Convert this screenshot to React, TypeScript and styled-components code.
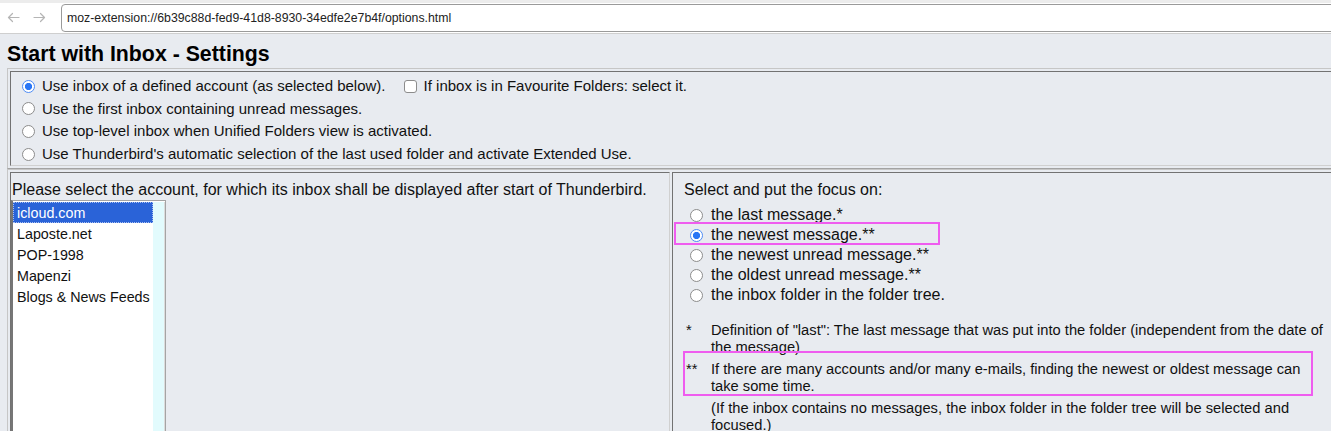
import React from "react";
import styled, { createGlobalStyle } from "styled-components";

const GlobalStyle = createGlobalStyle`
  html, body { margin: 0; padding: 0; background: #e8ebf0; overflow: hidden; }
  body { font-family: "Liberation Sans", Arial, Helvetica, sans-serif; color: #111; }
  * { box-sizing: border-box; }
`;

const Toolbar = styled.div`
  display: flex;
  align-items: center;
  height: 34px;
  background: #fff;
  border-top: 3px solid #ececec;
  border-bottom: 1px solid #cfcfcf;
  padding-bottom: 2px;
`;

const NavButton = styled.span`
  display: flex;
  align-items: center;
  justify-content: center;
  width: 26px;
  height: 26px;
`;

const NavGroup = styled.div`
  display: flex;
  align-items: center;
  width: 61px;
`;

const UrlField = styled.div`
  flex: 1;
  height: 28px;
  margin-top: 1px;
  margin-right: -8px;
  border: 1px solid #9a9a9a;
  border-radius: 4px;
  display: flex;
  align-items: center;
  padding-left: 5px;
  font-size: 12.3px;
  color: #222;
`;

const Page = styled.div`
  padding: 9px 0 0 7px;
`;

const Title = styled.h1`
  margin: 0 0 2px 0;
  font-size: 21.3px;
  line-height: 23px;
  font-weight: bold;
  color: #000;
`;

const TableBox = styled.div`
  width: 1336px;
  padding: 2px;
  border: 1px solid;
  border-color: #c6c6c6 #a2a2a2 #a2a2a2 #c6c6c6;
`;

const SplitTable = styled(TableBox)`
  display: grid;
  grid-template-columns: 660px 1fr;
  column-gap: 2px;
  align-items: stretch;
`;

const Cell = styled.div<{ $size?: number }>`
  border: 1px solid;
  border-color: #727272 #d0d0d0 #d0d0d0 #727272;
  font-size: ${(p) => p.$size ?? 16}px;
  line-height: 18px;
`;

const OptionsCell = styled(Cell)`
  padding: 3px 0 0 11px;
`;

const OptionRow = styled.label`
  display: flex;
  align-items: center;
  height: 22.6px;
  gap: 7px;
`;

const Radio = styled.span<{ $checked?: boolean }>`
  flex: none;
  width: 13px;
  height: 13px;
  border-radius: 50%;
  border: 1px solid ${(p) => (p.$checked ? "#4d8cf5" : "#8c8c8c")};
  background: ${(p) =>
    p.$checked
      ? "radial-gradient(circle, #2a76f5 0 3.3px, #ffffff 3.9px)"
      : "#fff"};
`;

const Checkbox = styled.span`
  flex: none;
  width: 13px;
  height: 13px;
  border-radius: 3px;
  border: 1px solid #8c8c8c;
  background: #fff;
  margin-left: 11px;
`;

const AccountCell = styled(Cell)`
  padding: 8px 0 0 0;
  height: 275px;
`;

const Prompt = styled.div`
  padding-left: 1px;
`;

const ListBox = styled.div`
  display: flex;
  width: 155px;
  height: 250px;
  margin-top: 1px;
  background: #fff;
  border: 1px solid #a4a4a4;
  border-left: 2px solid #767676;
  padding-top: 1px;
  font-size: 14.3px;
`;

const ListItems = styled.div`
  flex: 1;
  display: flex;
  flex-direction: column;
`;

const ListItem = styled.div<{ $selected?: boolean }>`
  height: 21px;
  line-height: 22px;
  padding-left: 4px;
  color: ${(p) => (p.$selected ? "#fff" : "#111")};
  background: ${(p) => (p.$selected ? "#2a63d8" : "transparent")};
  outline: ${(p) => (p.$selected ? "1px dotted #a9bff0" : "none")};
  outline-offset: -1px;
`;

const ScrollStrip = styled.div`
  width: 12px;
  background: #e2fbfd;
  border-right: 1px solid #dcdcdc;
`;

const FocusCell = styled(Cell)`
  padding: 8px 0 0 11px;
`;

const RadioList = styled.div`
  margin-top: 6px;
  display: flex;
  flex-direction: column;
`;

const FocusRow = styled.label`
  position: relative;
  display: flex;
  align-items: center;
  height: 20px;
  padding-left: 6px;
  gap: 8px;
`;

const Highlight = styled.span`
  position: absolute;
  border: 2px solid #ef5cef;
  pointer-events: none;
`;

const Notes = styled.div`
  margin-top: 17px;
  display: flex;
  flex-direction: column;
  gap: 5px;
  font-size: 14.7px;
`;

const Note = styled.div`
  position: relative;
  display: grid;
  grid-template-columns: 27px 616px;
  line-height: 17px;
`;

const Mark = styled.span`
  padding-left: 2px;
`;

const Arrow = ({ dir }: { dir: "left" | "right" }) => (
  <svg width="13" height="11" viewBox="0 0 13 11" fill="none" stroke="#b5b5b5" strokeWidth="1.2" strokeLinecap="round" strokeLinejoin="round">
    {dir === "left" ? (
      <>
        <path d="M12 5.5H1.5" />
        <path d="M5.5 1.5L1.5 5.5L5.5 9.5" />
      </>
    ) : (
      <>
        <path d="M1 5.5H11.5" />
        <path d="M7.5 1.5L11.5 5.5L7.5 9.5" />
      </>
    )}
  </svg>
);

const accounts = ["icloud.com", "Laposte.net", "POP-1998", "Mapenzi", "Blogs & News Feeds"];

const focusOptions = [
  "the last message.*",
  "the newest message.**",
  "the newest unread message.**",
  "the oldest unread message.**",
  "the inbox folder in the folder tree.",
];

export default function App() {
  return (
    <>
      <GlobalStyle />
      <Toolbar>
        <NavGroup>
          <NavButton>
            <Arrow dir="left" />
          </NavButton>
          <NavButton>
            <Arrow dir="right" />
          </NavButton>
        </NavGroup>
        <UrlField>moz-extension://6b39c88d-fed9-41d8-8930-34edfe2e7b4f/options.html</UrlField>
      </Toolbar>
      <Page>
        <Title>Start with Inbox - Settings</Title>
        <TableBox>
          <OptionsCell $size={15}>
            <OptionRow>
              <Radio $checked />
              Use inbox of a defined account (as selected below).
              <Checkbox />
              If inbox is in Favourite Folders: select it.
            </OptionRow>
            <OptionRow>
              <Radio />
              Use the first inbox containing unread messages.
            </OptionRow>
            <OptionRow>
              <Radio />
              Use top-level inbox when Unified Folders view is activated.
            </OptionRow>
            <OptionRow>
              <Radio />
              Use Thunderbird's automatic selection of the last used folder and activate Extended Use.
            </OptionRow>
          </OptionsCell>
        </TableBox>
        <SplitTable>
          <AccountCell>
            <Prompt>
              Please select the account, for which its inbox shall be displayed after start of Thunderbird.
            </Prompt>
            <ListBox>
              <ListItems>
                {accounts.map((a, i) => (
                  <ListItem key={a} $selected={i === 0}>
                    {a}
                  </ListItem>
                ))}
              </ListItems>
              <ScrollStrip />
            </ListBox>
          </AccountCell>
          <FocusCell>
            <div>Select and put the focus on:</div>
            <RadioList>
              {focusOptions.map((o, i) => (
                <FocusRow key={o}>
                  {i === 1 && <Highlight style={{ left: -10, top: -3, width: 266, height: 23 }} />}
                  <Radio $checked={i === 1} />
                  {o}
                </FocusRow>
              ))}
            </RadioList>
            <Notes>
              <Note>
                <Mark>*</Mark>
                <span>
                  Definition of "last": The last message that was put into the folder (independent from the date of the message)
                </span>
              </Note>
              <Note>
                <Highlight style={{ left: -1, top: -10.5, width: 630, height: 45 }} />
                <Mark>**</Mark>
                <span>
                  If there are many accounts and/or many e-mails, finding the newest or oldest message can take some time.
                </span>
              </Note>
              <Note>
                <Mark></Mark>
                <span>
                  (If the inbox contains no messages, the inbox folder in the folder tree will be selected and focused.)
                </span>
              </Note>
            </Notes>
          </FocusCell>
        </SplitTable>
      </Page>
    </>
  );
}
